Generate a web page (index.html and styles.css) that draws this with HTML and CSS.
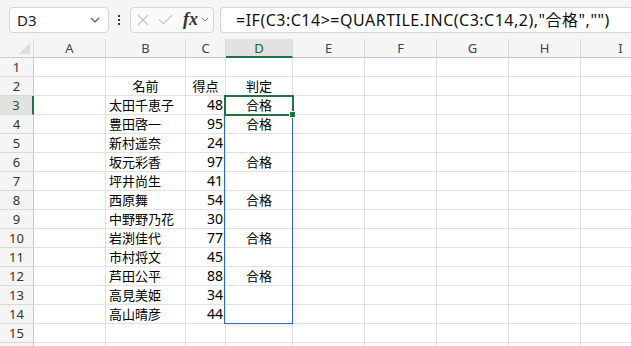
FILE: index.html
```html
<!DOCTYPE html>
<html>
<head>
  <meta name="viewport" content="width=device-width, initial-scale=1.0">
  <title>QUARTILE.INC 判定</title>
  <link rel="stylesheet" href="styles.css">
</head>
<body>
  <!-- Formula bar -->
  <div class="toolbar">
    <div class="name-box">
      <span>D3</span>
      <svg class="chev" width="10" height="6" viewBox="0 0 10 6"><path d="M1 1 L5 5 L9 1" fill="none" stroke="#555" stroke-width="1.2"/></svg>
    </div>
    <div class="dots"><i></i><i></i><i></i></div>
    <div class="fx-box">
      <svg width="12" height="12" viewBox="0 0 12 12"><path d="M1 1 L11 11 M11 1 L1 11" stroke="#c4c4c4" stroke-width="1.1" fill="none"/></svg>
      <svg width="15" height="11" viewBox="0 0 15 11"><path d="M1 5.5 L5.5 10 L14 1" stroke="#c4c4c4" stroke-width="1.1" fill="none"/></svg>
      <span class="fx">fx</span>
      <svg width="8" height="5" viewBox="0 0 8 5"><path d="M1 1 L4 4 L7 1" fill="none" stroke="#888" stroke-width="1"/></svg>
    </div>
    <div class="formula">=IF(C3:C14&gt;=QUARTILE.INC(C3:C14,2),"合格","")</div>
  </div>

  <!-- Sheet -->
  <div class="sheet-wrap">
    <div class="sheet">
      <div class="hd corner"></div><div class="hd">A</div><div class="hd">B</div><div class="hd">C</div><div class="hd sel-col">D</div><div class="hd">E</div><div class="hd">F</div><div class="hd">G</div><div class="hd">H</div><div class="hd">I</div>

      <div class="rh">1</div><div class="c"></div><div class="c"></div><div class="c"></div><div class="c"></div><div class="c"></div><div class="c"></div><div class="c"></div><div class="c"></div><div class="c"></div>
      <div class="rh">2</div><div class="c"></div><div class="c ctr">名前</div><div class="c ctr">得点</div><div class="c ctr">判定</div><div class="c"></div><div class="c"></div><div class="c"></div><div class="c"></div><div class="c"></div>
      <div class="rh sel-row">3</div><div class="c"></div><div class="c">太田千恵子</div><div class="c num">48</div><div class="c ctr">合格</div><div class="c"></div><div class="c"></div><div class="c"></div><div class="c"></div><div class="c"></div>
      <div class="rh">4</div><div class="c"></div><div class="c">豊田啓一</div><div class="c num">95</div><div class="c ctr">合格</div><div class="c"></div><div class="c"></div><div class="c"></div><div class="c"></div><div class="c"></div>
      <div class="rh">5</div><div class="c"></div><div class="c">新村遥奈</div><div class="c num">24</div><div class="c ctr"></div><div class="c"></div><div class="c"></div><div class="c"></div><div class="c"></div><div class="c"></div>
      <div class="rh">6</div><div class="c"></div><div class="c">坂元彩香</div><div class="c num">97</div><div class="c ctr">合格</div><div class="c"></div><div class="c"></div><div class="c"></div><div class="c"></div><div class="c"></div>
      <div class="rh">7</div><div class="c"></div><div class="c">坪井尚生</div><div class="c num">41</div><div class="c ctr"></div><div class="c"></div><div class="c"></div><div class="c"></div><div class="c"></div><div class="c"></div>
      <div class="rh">8</div><div class="c"></div><div class="c">西原舞</div><div class="c num">54</div><div class="c ctr">合格</div><div class="c"></div><div class="c"></div><div class="c"></div><div class="c"></div><div class="c"></div>
      <div class="rh">9</div><div class="c"></div><div class="c">中野野乃花</div><div class="c num">30</div><div class="c ctr"></div><div class="c"></div><div class="c"></div><div class="c"></div><div class="c"></div><div class="c"></div>
      <div class="rh">10</div><div class="c"></div><div class="c">岩渕佳代</div><div class="c num">77</div><div class="c ctr">合格</div><div class="c"></div><div class="c"></div><div class="c"></div><div class="c"></div><div class="c"></div>
      <div class="rh">11</div><div class="c"></div><div class="c">市村将文</div><div class="c num">45</div><div class="c ctr"></div><div class="c"></div><div class="c"></div><div class="c"></div><div class="c"></div><div class="c"></div>
      <div class="rh">12</div><div class="c"></div><div class="c">芦田公平</div><div class="c num">88</div><div class="c ctr">合格</div><div class="c"></div><div class="c"></div><div class="c"></div><div class="c"></div><div class="c"></div>
      <div class="rh">13</div><div class="c"></div><div class="c">高見美姫</div><div class="c num">34</div><div class="c ctr"></div><div class="c"></div><div class="c"></div><div class="c"></div><div class="c"></div><div class="c"></div>
      <div class="rh">14</div><div class="c"></div><div class="c">高山晴彦</div><div class="c num">44</div><div class="c ctr"></div><div class="c"></div><div class="c"></div><div class="c"></div><div class="c"></div><div class="c"></div>
      <div class="rh">15</div><div class="c"></div><div class="c"></div><div class="c"></div><div class="c"></div><div class="c"></div><div class="c"></div><div class="c"></div><div class="c"></div><div class="c"></div>
      <div class="rh"></div><div class="c"></div><div class="c"></div><div class="c"></div><div class="c"></div><div class="c"></div><div class="c"></div><div class="c"></div><div class="c"></div><div class="c"></div>
    </div>

    <!-- Overlays: referenced range and active cell -->
    <div class="range-box"></div>
    <div class="active-cell"><span class="handle"></span></div>
  </div>
</body>
</html>
```

FILE: styles.css
```css
/* Base */
body {
  margin: 0;
  padding: 0;
  background-color: #ffffff;
  font-family: "Noto Sans CJK JP", sans-serif;
  color: #000000;
  overflow: hidden;
}

/* Formula bar */
.toolbar {
  display: flex;
  align-items: center;
  height: 39px;
  padding: 0 0 0 9px;
  background-color: #f5f5f5;
  box-sizing: border-box;
}

.name-box {
  display: flex;
  align-items: center;
  justify-content: space-between;
  width: 100px;
  height: 26px;
  padding: 0 8px 0 7px;
  background-color: #ffffff;
  border: 1px solid #d6d6d6;
  border-radius: 4px;
  box-sizing: border-box;
  font-family: "Noto Sans", sans-serif;
  font-size: 15px;
  color: #222;
}

.dots {
  display: flex;
  flex-direction: column;
  gap: 2px;
  margin: 0 10px 0 9px;
}
.dots i {
  display: block;
  width: 2px;
  height: 2px;
  background-color: #333;
}

.fx-box {
  display: flex;
  align-items: center;
  gap: 9px;
  width: 84px;
  height: 26px;
  padding: 0 4px 0 6px;
  background-color: #fafafa;
  border: 1px solid #d6d6d6;
  border-radius: 4px;
  box-sizing: border-box;
}
.fx-box .fx {
  font-family: "Liberation Serif", serif;
  font-style: italic;
  font-weight: bold;
  font-size: 18px;
  color: #333;
  margin-left: 1px;
  margin-right: -6px;
}

.formula {
  flex: 1;
  height: 26px;
  line-height: 24px;
  margin-left: 6px;
  padding-left: 15px;
  background-color: #ffffff;
  border: 1px solid #d6d6d6;
  border-right: none;
  border-radius: 4px 0 0 4px;
  box-sizing: border-box;
  font-family: "Noto Sans", "Noto Sans CJK JP", sans-serif;
  font-size: 16px;
  letter-spacing: 0.5px;
  color: #111;
  white-space: nowrap;
}

/* Sheet grid */
.sheet-wrap {
  position: relative;
}

.sheet {
  display: grid;
  grid-template-columns: 34px 72px 80px 40px 67px 72px 72px 72px 72px 80px;
  grid-auto-rows: 19px;
}

.sheet > div {
  box-sizing: border-box;
  border-right: 1px solid #e1e1e1;
  border-bottom: 1px solid #e1e1e1;
  white-space: nowrap;
  overflow: hidden;
}

.hd, .rh {
  background-color: #f5f5f5;
  color: #444;
  font-family: "Noto Sans", sans-serif;
  font-size: 13px;
  line-height: 18px;
  text-align: center;
}
.hd {
  border-right-color: #d9d9d9 !important;
  border-bottom-color: #c8c8c8 !important;
}
.rh {
  border-right-color: #c8c8c8 !important;
  border-bottom-color: #d9d9d9 !important;
  color: #333;
}

.corner {
  position: relative;
}
.corner::after {
  content: "";
  position: absolute;
  right: 3px;
  bottom: 3px;
  border-left: 11px solid transparent;
  border-bottom: 11px solid #dcdcdc;
}

.sel-col {
  background-color: #e2e2e2;
  color: #185c37;
  border-bottom: 2px solid #217346 !important;
}
.sel-row {
  background-color: #e2e2e2;
  color: #185c37;
  border-right: 2px solid #217346 !important;
}

.c {
  font-size: 13px;
  line-height: 18px;
  padding: 0 3px;
}
.ctr {
  text-align: center;
}
.num {
  text-align: right;
  font-family: "Noto Sans", sans-serif;
  font-size: 14px;
  padding-right: 2px;
}

/* Blue outline of D4:D14 */
.range-box {
  position: absolute;
  left: 224px;
  top: 75px;
  width: 69px;
  height: 210px;
  border: 1px solid #2e6bc6;
  box-sizing: border-box;
  box-shadow: 2px 2px 4px rgba(0, 0, 0, 0.08);
}

/* Active cell D3 */
.active-cell {
  position: absolute;
  left: 224px;
  top: 56px;
  width: 70px;
  height: 21px;
  border: 2px solid #217346;
  box-sizing: border-box;
}
.handle {
  position: absolute;
  right: -4px;
  bottom: -4px;
  width: 5px;
  height: 5px;
  background-color: #217346;
  border: 1px solid #ffffff;
}
```
